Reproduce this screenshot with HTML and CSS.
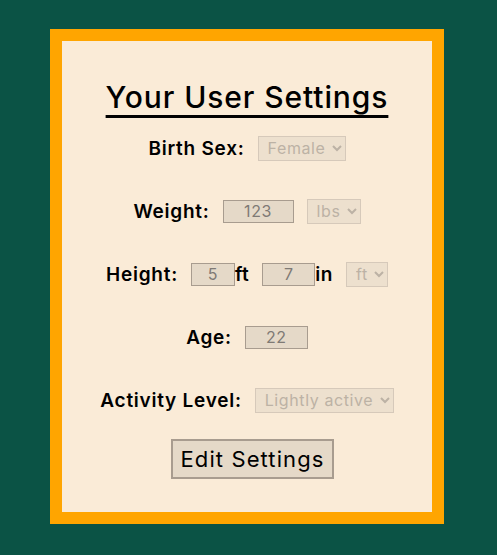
FILE: index.html
```html
<!DOCTYPE html>
<html lang="en">
<head>
<meta charset="utf-8">
<title>Your User Settings</title>
<link rel="stylesheet" href="styles.css">
</head>
<body>
<main class="card">
  <h1 class="title">Your User Settings</h1>
  <form class="form">
    <div class="row">
      <label class="label" for="sex">Birth Sex:</label>
      <select id="sex" class="select" disabled><option>Female</option></select>
    </div>
    <div class="row">
      <label class="label" for="weight">Weight:</label>
      <input id="weight" class="input w-weight" value="123" disabled>
      <select class="select" disabled><option>lbs</option></select>
    </div>
    <div class="row">
      <label class="label" for="ft">Height:</label>
      <span class="pair"><input id="ft" class="input w-ft" value="5" disabled><span class="unit">ft</span></span>
      <span class="pair"><input class="input w-in" value="7" disabled><span class="unit">in</span></span>
      <select class="select" disabled><option>ft</option></select>
    </div>
    <div class="row">
      <label class="label" for="age">Age:</label>
      <input id="age" class="input w-age" value="22" disabled>
    </div>
    <div class="row last">
      <label class="label" for="act">Activity Level:</label>
      <select id="act" class="select" disabled><option>Lightly active</option></select>
    </div>
    <button type="button" class="button">Edit Settings</button>
  </form>
</main>
</body>
</html>
```

FILE: styles.css
```css
html, body {
  margin: 0;
  padding: 0;
}
body {
  background: #0b5345;
  min-height: 555px;
  font-family: Inter, "Open Sans", sans-serif;
  color: #000;
  padding-top: 29px;
  box-sizing: border-box;
}
.card {
  box-sizing: border-box;
  width: 394px;
  height: 495px;
  margin-left: 50px;
  border: 12px solid #ffa500;
  background: #faebd7;
  display: flex;
  flex-direction: column;
  align-items: center;
  padding-top: 38px;
}
.title {
  margin: 0;
  font-size: 30px;
  font-weight: 500;
  line-height: 36px;
  letter-spacing: 0.9px;
  text-decoration: underline;
  text-decoration-thickness: 3px;
  text-underline-offset: 7px;
}
.form {
  display: flex;
  flex-direction: column;
  align-items: center;
  margin-top: 21px;
}
.row {
  display: flex;
  align-items: center;
  gap: 13px;
  height: 24px;
  margin-bottom: 39px;
}
.row.last {
  margin-bottom: 27px;
}
.label {
  font-size: 19px;
  font-weight: 600;
  letter-spacing: 0.75px;
}
.pair {
  display: flex;
  align-items: center;
}
.unit {
  font-size: 19px;
  font-weight: 600;
  letter-spacing: 0.5px;
}
.input {
  box-sizing: border-box;
  height: 23px;
  background: #e5d9c8;
  border: 1px solid #a89c8f;
  color: #7f7a75;
  font-family: inherit;
  font-size: 16px;
  letter-spacing: 0.6px;
  text-align: center;
  padding: 0;
}
.w-weight { width: 71px; }
.w-ft { width: 44px; }
.w-in { width: 53px; }
.w-age { width: 63px; }
.select {
  box-sizing: border-box;
  height: 25px;
  background-color: #e8dccb;
  border: 1px solid #c8bcae;
  color: #a39a90;
  font-family: inherit;
  font-size: 16px;
  letter-spacing: 0.6px;
  padding: 0 3px 0 5px;
  border-radius: 0;
}
.button {
  box-sizing: border-box;
  width: 163px;
  height: 40px;
  margin-left: 11px;
  background: #e5d9c8;
  border: 2px solid #a89c8f;
  font-family: inherit;
  font-size: 22px;
  letter-spacing: 1.1px;
  color: #000;
  padding: 0;
}
```
